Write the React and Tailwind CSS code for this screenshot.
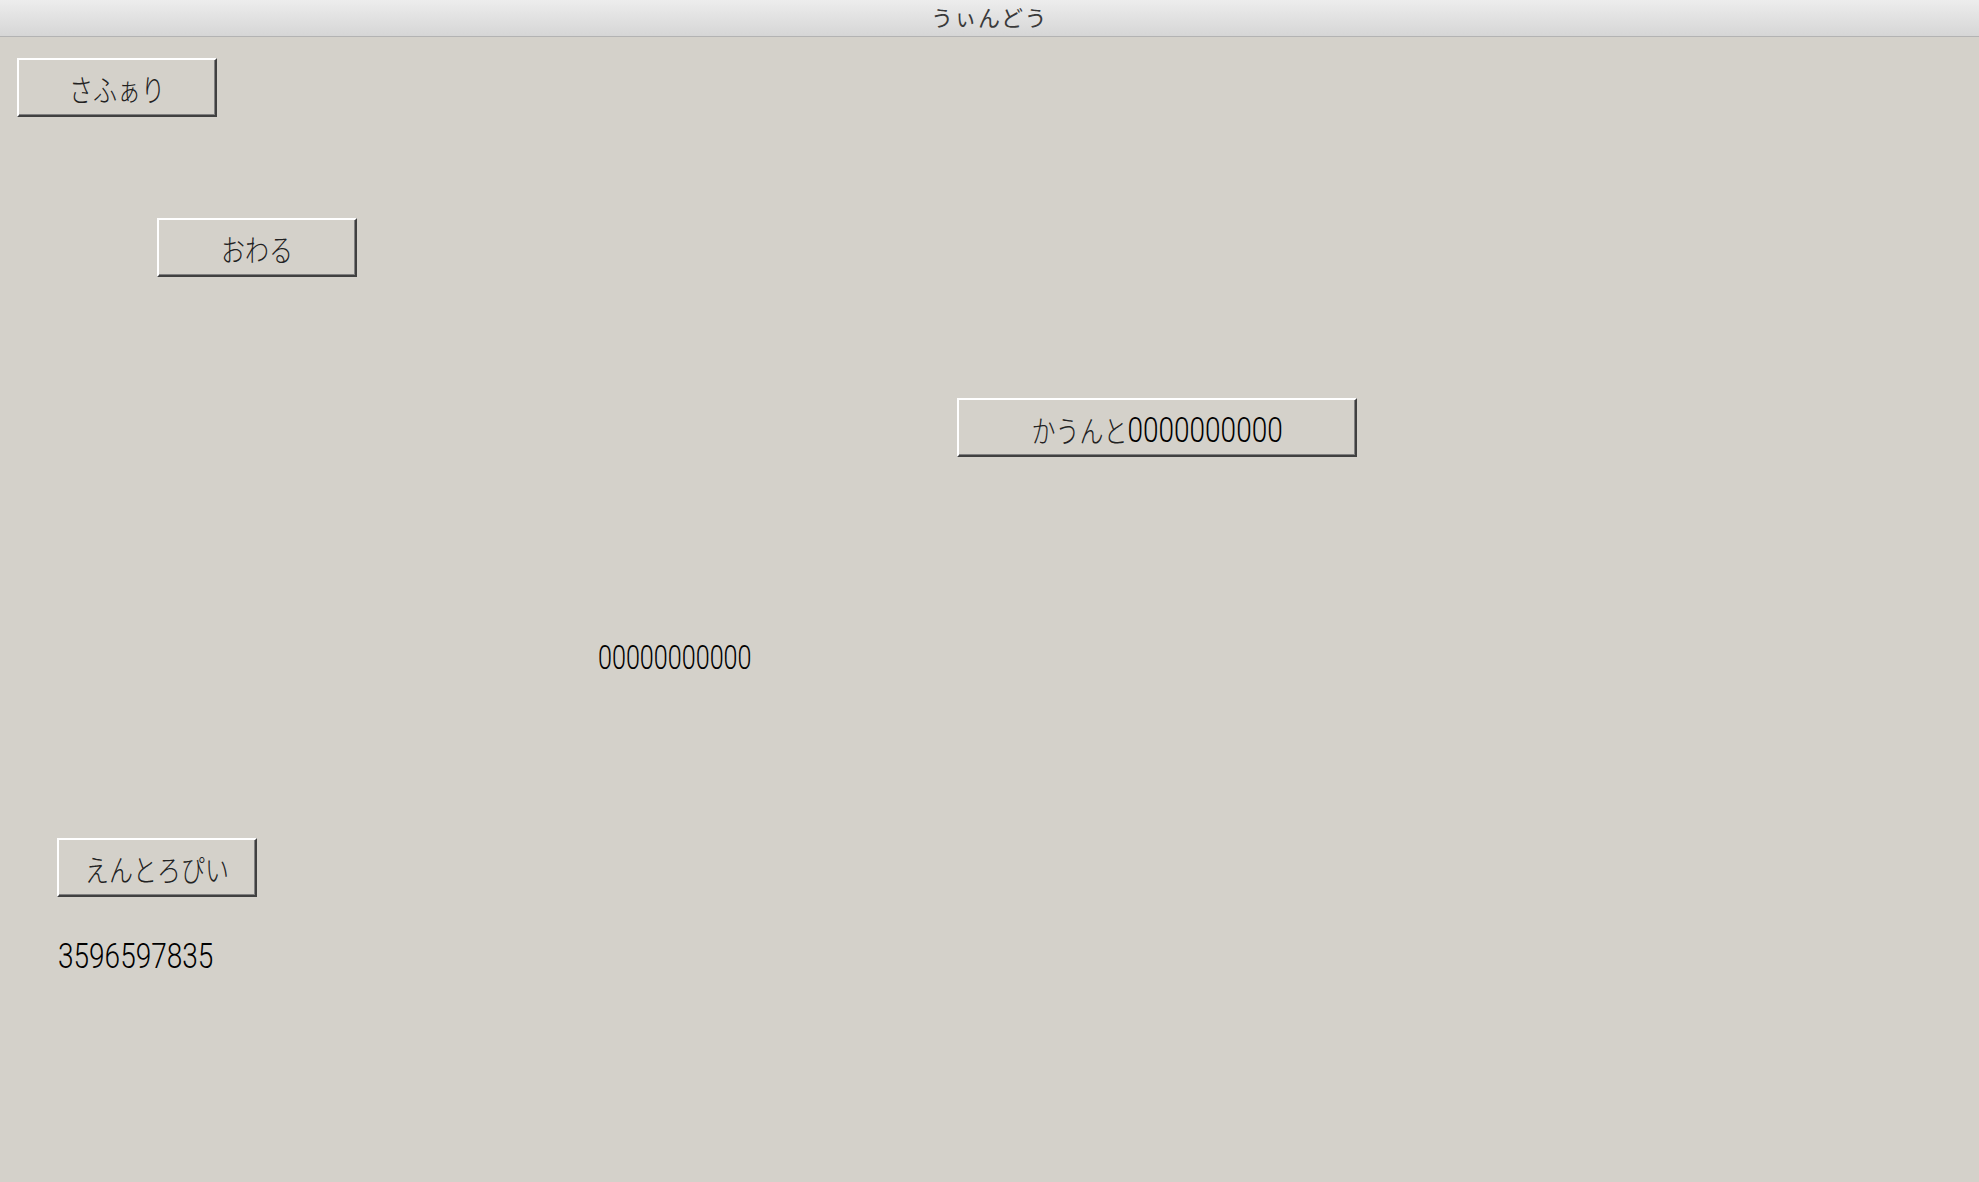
export default function App() {
    const btn =
        "flex items-center justify-center h-[59px] bg-[#d4d1ca] border-t-2 border-l-2 border-white border-b-2 border-r-2 border-b-[#404040] border-r-[#404040] shadow-[inset_-1px_-1px_0_#808080]";
    const kana = "font-['Noto_Sans_CJK_JP','Noto_Sans',sans-serif] font-light text-[30px] text-[#222]";
    const digits = "font-['Roboto','Liberation_Sans',sans-serif] font-light text-black";

    return (
        <div className="min-h-screen bg-[#d4d1ca] flex flex-col">
            <header className="h-[37px] pb-[3px] flex items-center justify-center bg-gradient-to-b from-[#ededed] to-[#d6d6d6] border-b border-[#b3b3b3] font-['Noto_Sans_CJK_JP',sans-serif] text-[22px] tracking-[1.5px] text-[#3a3a3a]">
                うぃんどう
            </header>

            <div className="flex flex-col items-start">
                <button className={`${btn} w-[200px] mt-[21px] ml-[17px]`}>
                    <span className={`${kana} leading-none scale-x-[0.8]`}>さふぁり</span>
                </button>

                <button className={`${btn} w-[200px] mt-[101px] ml-[157px]`}>
                    <span className={`${kana} leading-none scale-x-[0.8]`}>おわる</span>
                </button>

                <button className={`${btn} w-[400px] mt-[121px] ml-[957px] pt-[5px]`}>
                    <span className="flex items-baseline leading-none scale-x-[0.8]">
                        <span className={kana}>かうんと</span>
                        <span className={`${digits} text-[35px]`}>0000000000</span>
                    </span>
                </button>

                <div className={`${digits} mt-[183px] ml-[598px] h-[34px] text-[34px] leading-none origin-left scale-x-[0.74]`}>
                    00000000000
                </div>

                <button className={`${btn} w-[200px] mt-[164px] ml-[57px]`}>
                    <span className={`${kana} leading-none scale-x-[0.8]`}>えんとろぴい</span>
                </button>

                <div className={`${digits} mt-[42px] ml-[58px] h-[35px] text-[35px] leading-none origin-left scale-x-[0.8]`}>
                    3596597835
                </div>
            </div>
        </div>
    );
}
